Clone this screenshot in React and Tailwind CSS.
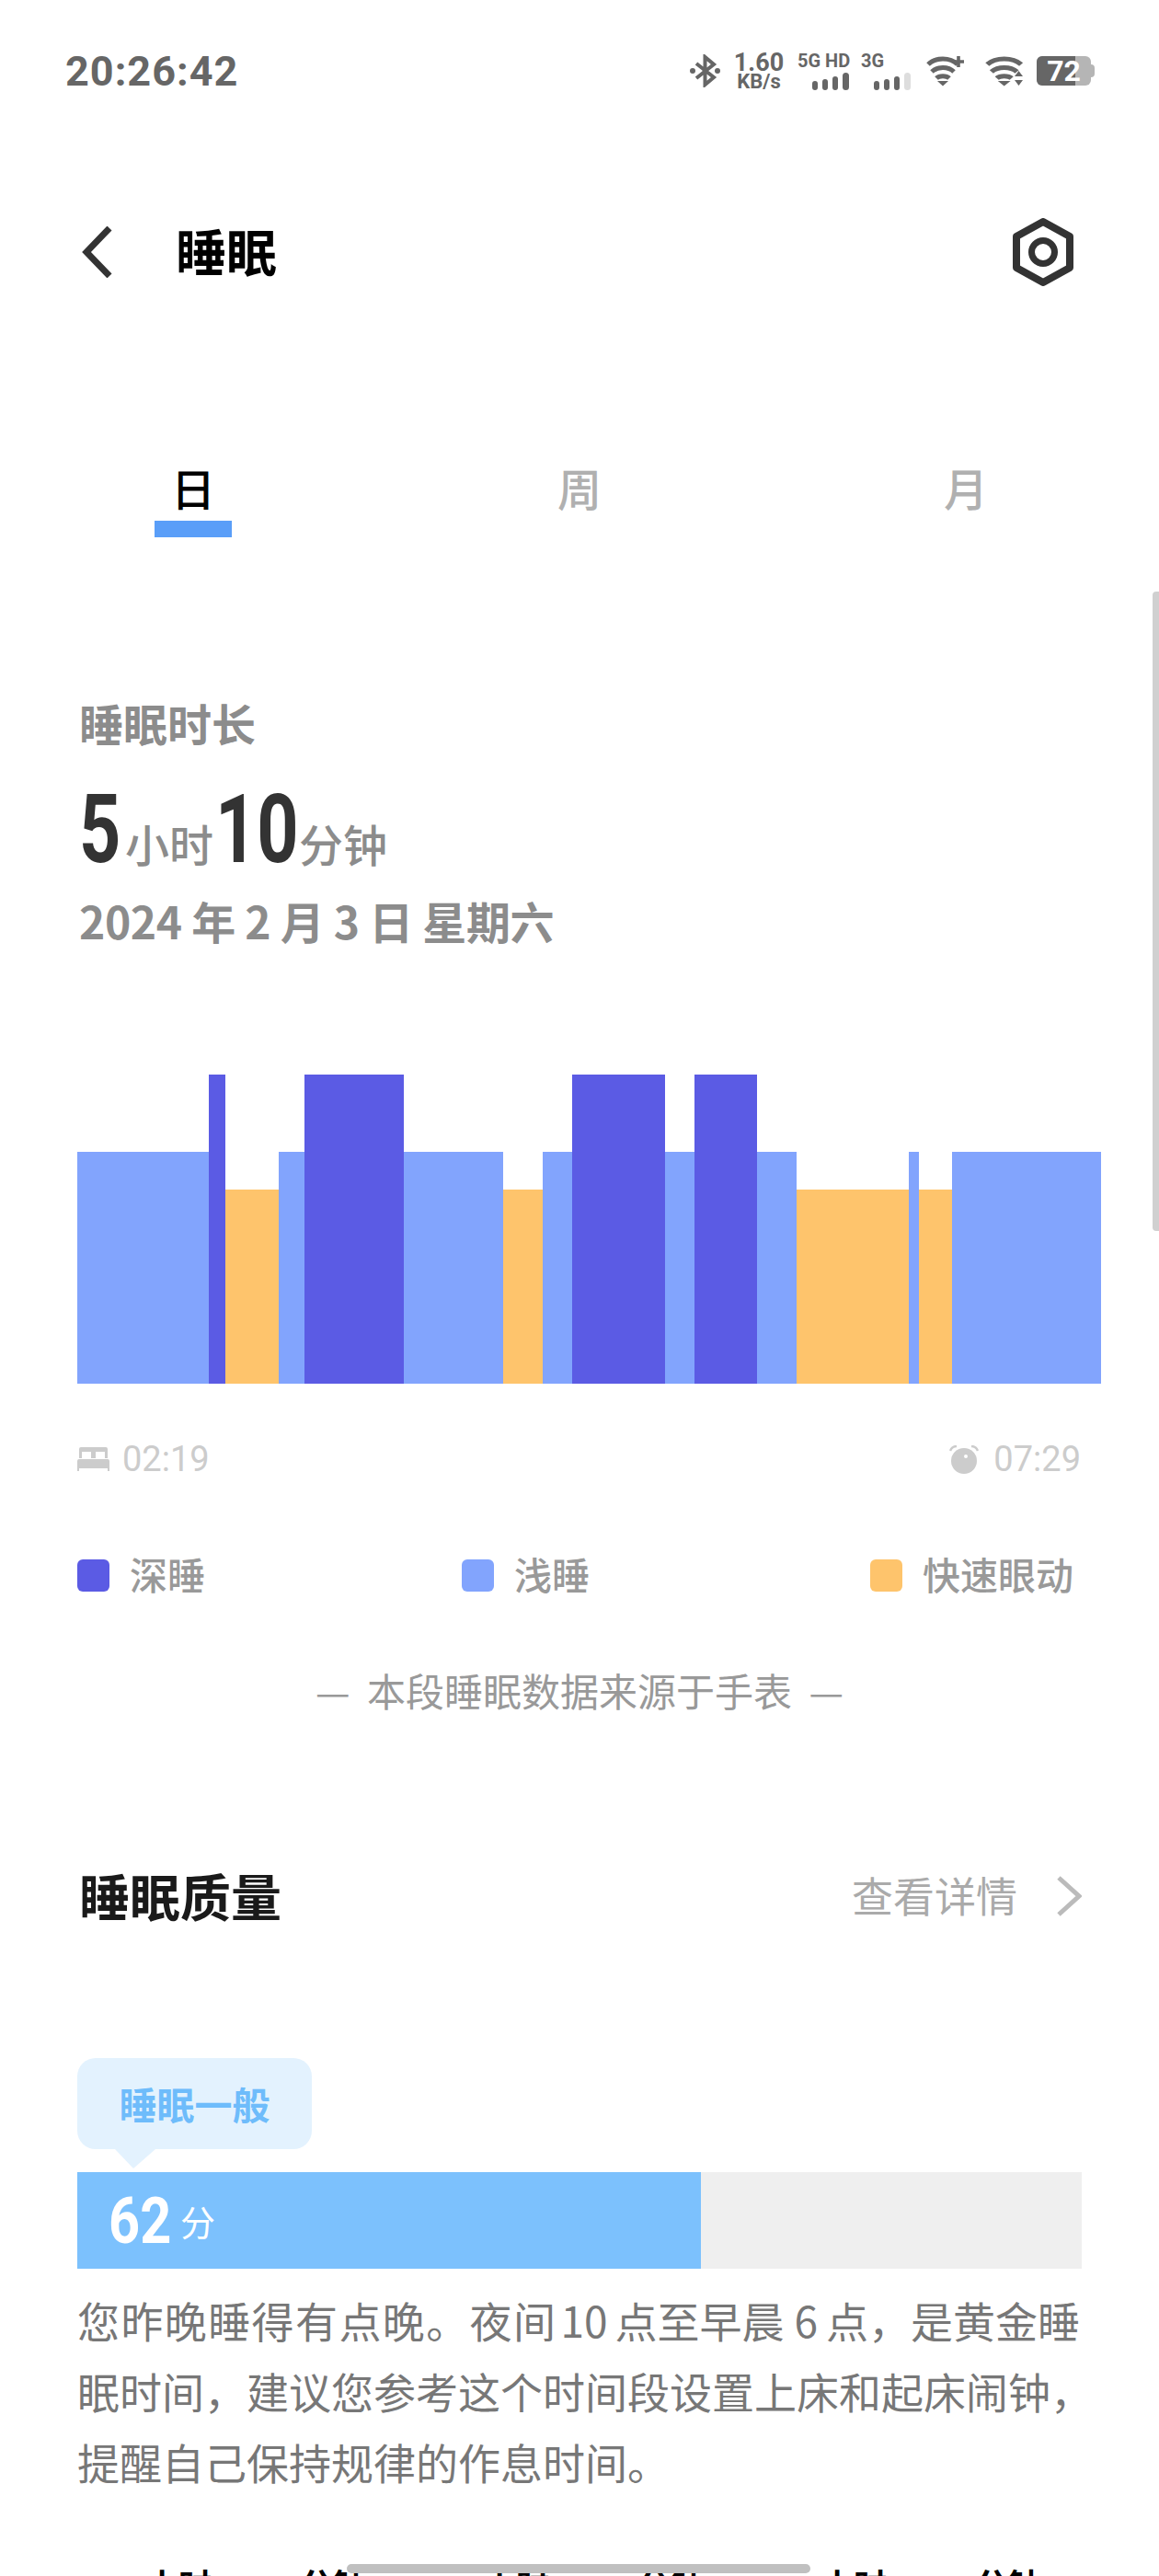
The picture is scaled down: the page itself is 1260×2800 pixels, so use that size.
const CJK = { fontFamily: '"Noto Sans CJK SC", "Noto Sans", sans-serif' }
const NUM = { fontFamily: 'Roboto, "Noto Sans CJK SC", sans-serif' }

const segments = [
  { w: 143, h: 252, c: 'bg-[#82a4fd]' },
  { w: 18, h: 336, c: 'bg-[#5b5be4]' },
  { w: 58, h: 211, c: 'bg-[#fec46c]' },
  { w: 28, h: 252, c: 'bg-[#82a4fd]' },
  { w: 108, h: 336, c: 'bg-[#5b5be4]' },
  { w: 108, h: 252, c: 'bg-[#82a4fd]' },
  { w: 43, h: 211, c: 'bg-[#fec46c]' },
  { w: 32, h: 252, c: 'bg-[#82a4fd]' },
  { w: 101, h: 336, c: 'bg-[#5b5be4]' },
  { w: 32, h: 252, c: 'bg-[#82a4fd]' },
  { w: 68, h: 336, c: 'bg-[#5b5be4]' },
  { w: 43, h: 252, c: 'bg-[#82a4fd]' },
  { w: 122, h: 211, c: 'bg-[#fec46c]' },
  { w: 11, h: 252, c: 'bg-[#82a4fd]' },
  { w: 36, h: 211, c: 'bg-[#fec46c]' },
  { w: 162, h: 252, c: 'bg-[#82a4fd]' },
]

function Wifi({ sx = 1, children }) {
  return (
    <svg width="42" height="34" viewBox="0 0 42 34" fill="none" stroke="#666" strokeWidth="5">
      <g transform={`scale(${sx} 1)`}>
        <path d="M2 10 C 10 2, 26 2, 34 10" />
        <path d="M6 18 C 12 12, 24 12, 30 18" />
        <path d="M11 25 C 14 22, 22 22, 25 25" />
        <path d="M12 28 H24 L18 33.5 Z" fill="#666" stroke="none" />
      </g>
      {children}
    </svg>
  )
}

function Signal({ last }) {
  return (
    <div className="flex items-end gap-[5px] h-[19px]">
      <div className="w-[6px] h-[10px] rounded-full bg-[#666]" />
      <div className="w-[6px] h-[12px] rounded-full bg-[#666]" />
      <div className="w-[6px] h-[15px] rounded-full bg-[#666]" />
      <div className={`w-[7px] h-[19px] rounded-full ${last}`} />
    </div>
  )
}

function StatusBar() {
  return (
    <div className="flex items-center justify-between h-[154px] pl-[71px] pr-[70px]">
      <span style={NUM} className="text-[45px] font-bold text-[#666] leading-none tracking-[1px]">20:26:42</span>
      <div className="flex items-center text-[#666]">
        <svg width="33" height="36" viewBox="0 0 33 36" fill="none" stroke="#666" strokeWidth="4">
          <path d="M7 10 L26 25 L16.5 33 V3 L26 11 L7 26" />
          <circle cx="3" cy="18" r="3" fill="#666" stroke="none" />
          <circle cx="30" cy="18" r="3" fill="#666" stroke="none" />
        </svg>
        <div style={NUM} className="ml-[16px] w-[52px] flex flex-col items-center font-bold leading-none">
          <span className="text-[27px] leading-[24px]">1.60</span>
          <span className="text-[22px] leading-[18px]">KB/s</span>
        </div>
        <div className="ml-[16px] w-[56px] flex flex-col items-end">
          <span style={NUM} className="text-[20px] font-bold leading-[19px] w-full whitespace-nowrap">5G HD</span>
          <div className="mt-[3px]"><Signal last="bg-[#666]" /></div>
        </div>
        <div className="ml-[13px] w-[54px] flex flex-col items-end">
          <span style={NUM} className="text-[20px] font-bold leading-[19px] w-full">3G</span>
          <div className="mt-[3px]"><Signal last="bg-[#ddd]" /></div>
        </div>
        <div className="ml-[17px]">
          <Wifi>
            <path d="M29 7 H41 M35 1 V13" strokeWidth="3.6" />
          </Wifi>
        </div>
        <div className="ml-[22px]">
          <Wifi sx={1.15}>
            <path d="M32 23 H41 L36.5 17 Z M32 27 H41 L36.5 33 Z" fill="#666" stroke="none" />
          </Wifi>
        </div>
        <div className="ml-[14px] flex items-center">
          <div className="relative w-[59px] h-[32px] rounded-[6px] bg-[#b5b5b5] overflow-hidden flex items-center justify-center">
            <div className="absolute left-0 top-0 bottom-0 w-[42px] bg-[#666]" />
            <span style={NUM} className="relative text-[32px] font-bold text-white leading-none">72</span>
          </div>
          <div className="w-[4px] h-[14px] rounded-r bg-[#b5b5b5]" />
        </div>
      </div>
    </div>
  )
}

function Header() {
  return (
    <div className="flex items-center justify-between h-[90px] mt-[75px] pl-[88px] pr-[93px]">
      <div className="flex items-center">
        <svg width="34" height="56" viewBox="0 0 34 56" fill="none" stroke="#333" strokeWidth="7">
          <path d="M31 2 L6 28 L31 54" />
        </svg>
        <span style={CJK} className="ml-[69px] mb-[5px] text-[55px] font-bold text-black leading-none">睡眠</span>
      </div>
      <svg width="66" height="74" viewBox="0 0 66 74" fill="none" stroke="#333" strokeWidth="8">
        <path d="M33 4 L62 20 V54 L33 70 L4 54 V20 Z" strokeLinejoin="round" />
        <circle cx="33" cy="37" r="12.5" strokeWidth="7" />
      </svg>
    </div>
  )
}

function Tabs() {
  return (
    <div style={CJK} className="grid grid-cols-3 mt-[182px] w-[1260px]">
      <div className="flex flex-col items-center w-[84px] ml-[168px]">
        <span className="text-[48px] leading-[56px] text-black font-medium">日</span>
        <div className="w-[84px] h-[18px] bg-[#5a9ef8] mt-[9px]" />
      </div>
      <span className="text-[48px] leading-[56px] text-[#b0b0b0] font-medium text-center">周</span>
      <span className="text-[48px] leading-[56px] text-[#b0b0b0] font-medium text-center">月</span>
    </div>
  )
}

function Summary() {
  return (
    <div style={CJK} className="mt-[173px] pl-[86px]">
      <div className="text-[48px] leading-[56px] font-bold text-[#8c8c8c]">睡眠时长</div>
      <div className="flex items-baseline mt-[37px] h-[84px]">
        {/* the big digits are a condensed face in the picture, Roboto squeezed to fit */}
        <span style={NUM} className="inline-block w-[46px] origin-left scale-x-[0.76] text-[104px] font-bold text-[#333] leading-none">5</span>
        <span className="text-[48px] font-medium text-[#8c8c8c] ml-[4px]">小时</span>
        <span style={NUM} className="inline-block w-[88px] ml-[2px] origin-left scale-x-[0.76] text-[104px] font-bold text-[#333] leading-none">10</span>
        <span className="text-[48px] font-medium text-[#8c8c8c] ml-[3px]">分钟</span>
      </div>
      <div className="text-[48px] leading-[56px] font-bold text-[#8c8c8c] mt-[38px] tracking-[-0.4px]">2024 年 2 月 3 日 星期六</div>
    </div>
  )
}

function Chart() {
  return (
    <div className="mt-[140px] ml-[84px] flex items-end h-[336px]">
      {segments.map((s, i) => (
        <div key={i} className={s.c} style={{ width: s.w, height: s.h }} />
      ))}
    </div>
  )
}

function TimeRow() {
  return (
    <div style={NUM} className="flex items-center justify-between mt-[60px] h-[44px] pl-[84px] pr-[85px] text-[38px] text-[#ccc]">
      <div className="flex items-center">
        <svg width="35" height="26" viewBox="0 0 35 26" fill="#ccc">
          <path d="M4 0 H31 Q33 0 33 2 V12 H30 V5 H20 V12 H15 V5 H5 V12 H2 V2 Q2 0 4 0 Z" />
          <path d="M2 13 H33 Q35 13 35 15 V26 H33 V23 H2 V26 H0 V15 Q0 13 2 13 Z" />
        </svg>
        <span className="ml-[14px]">02:19</span>
      </div>
      <div className="flex items-center">
        <svg width="32" height="31" viewBox="0 0 32 31" fill="#ccc">
          <circle cx="16" cy="17" r="14" />
          <circle cx="18" cy="12" r="2" fill="#fff" />
          <path d="M1 6 Q3 1 8 1" fill="none" stroke="#ccc" strokeWidth="2.5" />
          <path d="M31 6 Q29 1 24 1" fill="none" stroke="#ccc" strokeWidth="2.5" />
        </svg>
        <span className="ml-[16px]">07:29</span>
      </div>
    </div>
  )
}

function Legend() {
  const items = [
    { label: '深睡', c: 'bg-[#5b5be4]', w: 'w-[418px]' },
    { label: '浅睡', c: 'bg-[#82a4fd]', w: 'w-[444px]' },
    { label: '快速眼动', c: 'bg-[#fec46c]', w: '' },
  ]
  return (
    <div style={CJK} className="flex items-center mt-[81px] pl-[84px] h-[46px]">
      {items.map((it) => (
        <div key={it.label} className={`flex items-center ${it.w}`}>
          <div className={`w-[35px] h-[35px] rounded-[6px] ${it.c}`} />
          <span className="ml-[22px] mb-[3px] text-[41px] font-medium text-[#999] leading-none">{it.label}</span>
        </div>
      ))}
    </div>
  )
}

function Source() {
  return (
    <div style={CJK} className="mt-[79px] text-center text-[42px] leading-[46px] text-[#999] [word-spacing:9px]">
      — 本段睡眠数据来源于手表 —
    </div>
  )
}

function Quality() {
  return (
    <div className="px-[84px]" style={CJK}>
      <div className="flex items-center justify-between mt-[169px] h-[64px]">
        <span className="ml-[2px] mb-[3px] text-[55px] font-bold text-[#1a1a1a] leading-none">睡眠质量</span>
        <div className="flex items-center">
          <span className="mb-[3px] text-[45px] text-[#aaa] leading-none">查看详情</span>
          <svg className="ml-[42px]" width="28" height="44" viewBox="0 0 28 44" fill="none" stroke="#bbb" strokeWidth="5">
            <path d="M3 2 L25 22 L3 42" />
          </svg>
        </div>
      </div>
      <div className="relative mt-[144px] w-[255px] h-[99px] rounded-[20px] bg-[#e3f2fe] flex items-center justify-center">
        <span className="text-[41px] font-bold text-[#6ebcfb] leading-none">睡眠一般</span>
        <svg className="absolute left-[41px] top-[99px]" width="44" height="21" viewBox="0 0 44 21" fill="#e3f2fe">
          <path d="M0 0 H44 L20 21 Z" />
        </svg>
      </div>
      <div className="mt-[25px] h-[105px] bg-[#efefef]">
        <div className="h-full w-[678px] bg-[#7cc1fd] flex items-center pl-[34px] text-white">
          <span style={NUM} className="inline-block w-[68px] origin-left scale-x-[0.85] text-[70px] font-bold leading-none">62</span>
          <span className="ml-[10px] text-[38px] leading-none">分</span>
        </div>
      </div>
      <div className="mt-[17px] text-[46px] leading-[77px] text-[#777] whitespace-nowrap">
        <p>
          <span className="tracking-[1.4px]">您昨晚睡得有点晚。夜间</span>
          <span className="ml-[4px]">10</span>
          <span className="ml-[8px]">点至早晨</span>
          <span className="ml-[11px]">6</span>
          <span className="ml-[9px]">点，是黄金睡</span>
        </p>
        <p>眠时间，建议您参考这个时间段设置上床和起床闹钟，</p>
        <p>提醒自己保持规律的作息时间。</p>
      </div>
    </div>
  )
}

function NextRow() {
  return (
    <div style={CJK} className="flex mt-[74px] pl-[158px] text-[36px] font-bold text-black leading-[40px] whitespace-nowrap">
      {[0, 1, 2].map((i) => (
        <div key={i} className="flex w-[367px]">
          <span className="w-[168px]">小时</span>
          <span>分钟</span>
        </div>
      ))}
    </div>
  )
}

export default function App() {
  return (
    <div className="relative w-[1260px] h-[2800px] bg-white overflow-hidden">
      <StatusBar />
      <Header />
      <Tabs />
      <Summary />
      <Chart />
      <TimeRow />
      <Legend />
      <Source />
      <Quality />
      <NextRow />
      {/* scrollbar and home pill float over the page */}
      <div className="absolute right-0 top-[643px] w-[7px] h-[695px] rounded-l bg-[#d0d0d0]" />
      <div className="absolute left-[377px] top-[2787px] w-[504px] h-[10px] rounded-full bg-[#c0c0c0]" />
    </div>
  )
}
